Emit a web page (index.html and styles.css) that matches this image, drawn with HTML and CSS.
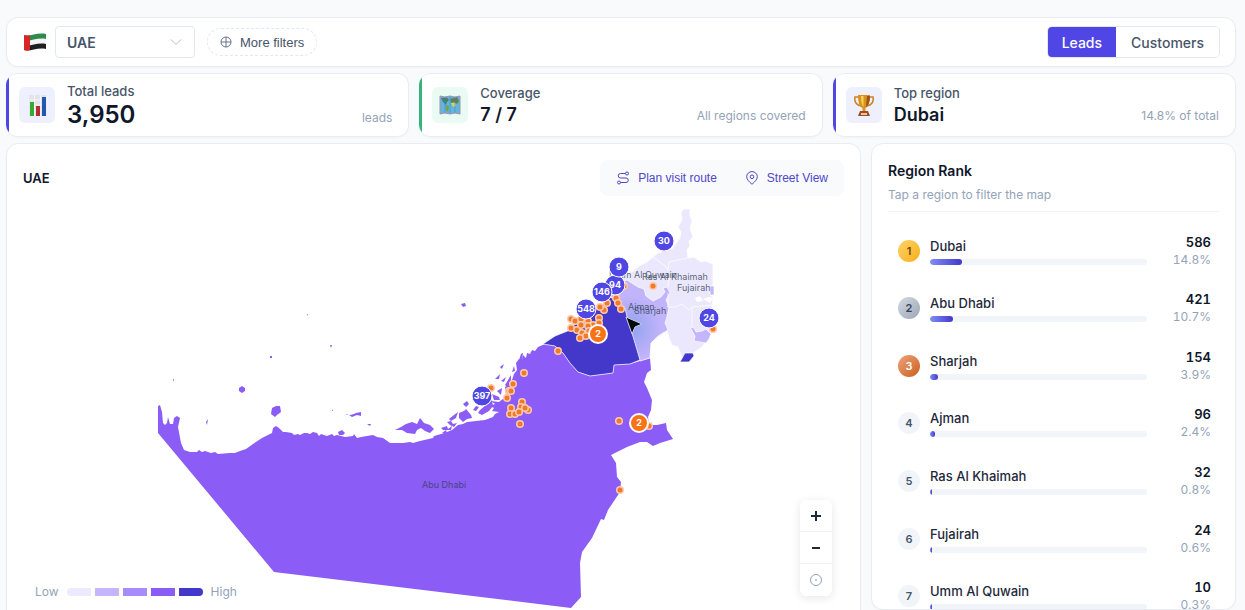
FILE: index.html
```html
<!DOCTYPE html>
<html lang="en">
<head>
<meta charset="utf-8">
<meta name="viewport" content="width=device-width, initial-scale=1">
<title>Lead map</title>
<link rel="stylesheet" href="styles.css">
</head>
<body>
<div class="app">
  <header class="toolbar">
    <svg class="flag" viewBox="0 0 24 20" aria-hidden="true">
      <path d="M1 3C7 5 14 0 23 2V17C14 15 7 20 1 18Z" fill="#f4f4f4"/>
      <path d="M1 3C7 5 14 0 23 2V7C14 5 7 10 1 8Z" fill="#2f8a4c"/>
      <path d="M1 13C7 15 14 10 23 12V17C14 15 7 20 1 18Z" fill="#1f1f22"/>
      <path d="M1 3Q4 4 7 3V18Q4 19 1 18Z" fill="#d92525"/>
    </svg>
    <div class="country">
      <select class="country-select" aria-label="Country"><option>UAE</option></select>
      <svg class="country-chevron" viewBox="0 0 12 8" aria-hidden="true"><path d="M1 1.5L6 6.5L11 1.5"/></svg>
    </div>
    <button class="more" type="button">
      <svg class="more-icon" viewBox="0 0 12 12" aria-hidden="true"><circle cx="6" cy="6" r="5"/><path d="M6 1V11M1 6H11"/></svg>
      More filters
    </button>
    <div class="segments" role="group" aria-label="Data set">
      <button class="segment segment-on" type="button" aria-pressed="true">Leads</button>
      <button class="segment" type="button" aria-pressed="false">Customers</button>
    </div>
  </header>

  <section class="stats">
    <article class="stat">
      <div class="stat-icon">
        <svg viewBox="0 0 22 22" aria-hidden="true"><path d="M3 1H20V22H3Z" fill="#e3e4ea"/><path d="M3 6H20M3 11H20M3 16H20M8.500 1V22M14.500 1V22" stroke="#f4f4f8"/><path d="M4 8H8V22H4Z" fill="#35ab35"/><path d="M10 12H14V22H10Z" fill="#b92c32"/><path d="M16 3H20V22H16Z" fill="#2458ae"/></svg>
      </div>
      <div class="stat-text"><span class="stat-label">Total leads</span><strong class="stat-value stat-value-lg">3,950</strong></div>
      <span class="stat-note stat-note-lg">leads</span>
    </article>
    <article class="stat stat-green">
      <div class="stat-icon">
        <svg viewBox="0 0 22 22" aria-hidden="true"><path d="M1 2L6 3L11 2L16 3L21 2V20L16 19L11 20L6 19L1 20Z" fill="#62b5dc"/><path d="M2 4L8 3.500L10 6L8 8L7 11L4 8Z" fill="#497f72"/><path d="M7 11L10 12L9 18L7 16Z" fill="#7c9e50"/><path d="M11 5L18 3L20 7L18 10L15 8L12 9Z" fill="#5c8255"/><path d="M12 9L16 9L17 12L14 13Z" fill="#d9d451"/><path d="M6 3V19M11 2V20M16 3V19" stroke="#3e87ab" stroke-opacity=".5"/><path d="M1 2L6 3L11 2L16 3L21 2V20L16 19L11 20L6 19L1 20Z" fill="none" stroke="#a58fae"/></svg>
      </div>
      <div class="stat-text"><span class="stat-label">Coverage</span><strong class="stat-value">7 / 7</strong></div>
      <span class="stat-note">All regions covered</span>
    </article>
    <article class="stat">
      <div class="stat-icon">
        <svg viewBox="0 0 22 22" aria-hidden="true"><path d="M6 3H2C1 8 4 11 8 12M16 3H20C21 8 18 11 14 12" fill="none" stroke="#cc8128" stroke-width="1.500"/><path d="M5 1H17C17 9 15 13 12.500 14V18H9.500V14C7 13 5 9 5 1Z" fill="#d9921b"/><path d="M8 2H10.500V13C9 11 8 8 8 2Z" fill="#f8d25a"/><path d="M14 2H17C17 8 15 12 13 13Z" fill="#9c5317"/><path d="M7 17H15L17 22H5Z" fill="#9a4c26"/><path d="M8 19H14V21H8Z" fill="#eec798"/></svg>
      </div>
      <div class="stat-text"><span class="stat-label">Top region</span><strong class="stat-value">Dubai</strong></div>
      <span class="stat-note">14.8% of total</span>
    </article>
  </section>

  <main class="content">
    <section class="panel map-panel">
      <div class="map-head">
        <h2 class="map-title">UAE</h2>
        <div class="map-actions">
          <button class="map-action" type="button">
            <svg class="action-icon" viewBox="0 0 14 14" aria-hidden="true"><circle cx="11" cy="2.500" r="1.500"/><circle cx="3" cy="11.500" r="1.500"/><path d="M9.500 2.500H4.500A2.200 2.200 0 0 0 4.500 7H10A2.200 2.200 0 0 1 10 11.500H4.500"/></svg>
            Plan visit route
          </button>
          <button class="map-action" type="button">
            <svg class="action-icon" viewBox="0 0 14 14" aria-hidden="true"><path d="M7 13.300C4 10.500 1.700 8.500 1.700 5.700A5.300 5.100 0 0 1 12.300 5.700C12.300 8.500 10 10.500 7 13.300Z"/><circle cx="7" cy="5.800" r="1.800"/></svg>
            Street View
          </button>
        </div>
      </div>
      <div class="map-canvas">
        <svg class="map" viewBox="23 200 821 416" role="img" aria-label="Leads by emirate">
          <defs>
            <radialGradient id="hover" gradientUnits="userSpaceOnUse" cx="630" cy="328" r="32"><stop offset="0" stop-color="#8fa1ee"/><stop offset="1" stop-color="#c2b4fb"/></radialGradient>
            <g id="dot"><circle r="4" fill="#fdc9ae"/><circle r="2.500" fill="#f07a26"/></g>
          </defs>
          <path class="fill-4" d="M158 406L160 405L162 412L163 423L165 425L167 423L168 417L170 424H173L174 418L177 416L180 418L178 427L181 443L184 450L190 452L197 452L199 450L202 452L205 451L211 453L215 452L218 454L230 453L235 453L240 451L246 449L253 444L262 438L272 433L273 428L276 426L279 428L283 432L286 432L292 433L294 435L298 434L300 435L304 433L307 433L310 434L313 432L317 433L319 436L321 434L327 436L332 434L334 436L337 435L345 437L353 436L354 434L357 438L361 437L373 435L377 437L383 438L390 443L403 443L410 442L413 443L420 441L433 438L434 436L441 434L447 432L452 430L458 425L463 424L467 422L476 421L485 420L493 417L495 414L499 412L492 411L494 408L490 406L495 404L491 401L499 402L504 398L506 393L505 387L509 385L512 380L514 374L517 370L516 363L519 359L522 360L523 355L526 358L527 353L530 354L532 350L535 351L538 347L545 344L555 346L563 353L570 363L578 372L590 376L613 373L614 365L630 364L650 358L651 370L647 373L644 382L647 388L652 400L651 410L648 417L649 425H657L666 423L667 430L673 439L660 443L653 446L647 442L640 442L627 447L611 455L616 463L617 477L621 482L620 492L608 510L604 520L601 519L592 538L582 552L580 563L581 597L571 608L274 572L158 433Z"/>
          <g class="fill-4">
            <path d="M239 388L242 386L245 388V391L242 393L239 391Z"/><path d="M272 408L276 406L280 406L281 412L277 415L275 417L271 414Z"/>
            <path d="M338 432L342 430L345 433L343 435L339 435Z"/><path d="M345 414L347 415L350 415L354 414L356 413L361 412L361 416L357 415L352 417L349 415Z"/><path d="M367 424L371 424L370 426Z"/>
            <path d="M395 430L401 427L406 424L412 422L417 424L420 418L424 423L430 425L434 429L430 433L425 431L421 428L417 430L415 434L407 433L402 430Z"/>
            <path d="M441 428L447 426L448 429L452 426L451 430L443 430ZM447 422L451 421L453 424L457 423L454 427L450 425ZM442 433L446 430L447 433ZM449 419L454 415L458 412L456 418L451 421Z"/>
            <path d="M459 413L464 411L466 409L471 415L472 418L467 419L463 422L459 418ZM463 404L467 401L469 404L466 407ZM473 410L476 406L479 407L476 411ZM480 410L486 405L492 400L493 406L489 411L482 415L478 413ZM492 394L499 397L500 400L494 400ZM497 391L502 388L501 395ZM501 381L506 377L504 382ZM495 379L500 374L499 379ZM500 367L504 364L502 369ZM505 385L511 375L511 380L508 388Z"/>
            <path d="M512 372L514 366L515 371ZM519 360L521 354L523 353L522 361ZM461 304L465 303L466 306L463 307ZM330 345L332 345L331 348ZM206 422L208 419L207 425ZM173 379L174 379L174 382ZM307 314L308 314L308 316ZM270 356H272V358H270ZM332 409L333 411H332Z"/>
          </g>
          <g class="edge">
            <path class="fill-1" d="M610 276L620 273L632 272L639 266L647 262L653 257L658 253L666 251L673 248L677 242L680 238L681 232L678 227L682 220L681 212L684 209H690V216L692 221L690 228L693 237L689 241L690 246L687 250L688 258L694 257L701 262L705 261L713 264V290L709 293L713 298L712 306L714 313L713 332L707 340L702 347L690 355L682 357L678 347L672 345L670 340L667 331L651 343L640 330V300L618 284Z"/>
            <path fill="url(#hover)" d="M609 295L618 283L627 280L638 287L644 289L646 296L653 301L661 297L665 292L663 288L667 287L670 293L666 300L669 307L667 317L665 323L668 330L658 336L651 343L650 358L640 361L630 330L622 306Z"/>
            <path class="fill-2" d="M690 327L694 328L696 332L702 331L706 329L711 334L709 339L706 343L700 342L694 341L695 336Z"/>
            <path class="fill-2" d="M710 286H714V295L710 295Z"/>
            <path class="fill-5" d="M543 344L555 336L570 330L578 320L590 317L596 309L602 306L609 297L618 300L625 308L627 317L632 333L640 360L630 364L614 365L613 373L590 376L578 372L570 363L563 353L555 346Z"/>
            <path class="fill-5" d="M680 362L685 353H693L694 356L689 362Z"/>
            <path class="border" d="M632 268L641 274L649 279M653 257L665 266L668 270L669 262L678 260L688 258M667 307L675 307L682 304L689 310L692 307V327M668 307V293M692 307L713 305M669 277L668 287"/>
          </g>
          <path fill="#fff" d="M695 298L700 296L703 301L697 302ZM703 299L709 297L713 298L710 303Z"/>
          <g class="map-label">
            <text x="422" y="488">Abu Dhabi</text><text x="609" y="278">Umm Al Quwain</text><text x="642" y="280">Ras Al Khaimah</text><text x="677" y="291">Fujairah</text><text x="628" y="310">Ajman</text><text x="634" y="314">Sharjah</text>
          </g>
          <g>
            <use href="#dot" x="664" y="248"/><use href="#dot" x="653" y="286"/><use href="#dot" x="624" y="286"/><use href="#dot" x="616" y="298"/><use href="#dot" x="618" y="303"/><use href="#dot" x="621" y="309"/><use href="#dot" x="607" y="303"/><use href="#dot" x="604" y="310"/><use href="#dot" x="600" y="307"/><use href="#dot" x="571" y="319"/><use href="#dot" x="575" y="321"/><use href="#dot" x="571" y="328"/><use href="#dot" x="581" y="319"/><use href="#dot" x="588" y="321"/><use href="#dot" x="599" y="318"/><use href="#dot" x="599" y="323"/><use href="#dot" x="593" y="325"/><use href="#dot" x="577" y="330"/><use href="#dot" x="581" y="325"/><use href="#dot" x="588" y="326"/><use href="#dot" x="582" y="333"/><use href="#dot" x="589" y="331"/><use href="#dot" x="580" y="338"/><use href="#dot" x="586" y="336"/><use href="#dot" x="558" y="351"/><use href="#dot" x="713" y="329"/>
            <use href="#dot" x="524" y="373"/><use href="#dot" x="513" y="384"/><use href="#dot" x="509" y="391"/><use href="#dot" x="511" y="391"/><use href="#dot" x="507" y="398"/><use href="#dot" x="491" y="388"/><use href="#dot" x="522" y="402"/><use href="#dot" x="521" y="407"/><use href="#dot" x="511" y="408"/><use href="#dot" x="510" y="414"/><use href="#dot" x="515" y="414"/><use href="#dot" x="528" y="410"/><use href="#dot" x="525" y="408"/><use href="#dot" x="519" y="412"/><use href="#dot" x="520" y="424"/><use href="#dot" x="619" y="421"/><use href="#dot" x="649" y="426"/><use href="#dot" x="620" y="490"/>
          </g>
          <g class="cluster">
            <circle cx="664" cy="241" r="10"/><text x="664" y="244">30</text>
            <circle cx="615" cy="285" r="10"/><text x="615" y="288">94</text>
            <circle cx="619" cy="267" r="10"/><text x="619" y="270">9</text>
            <circle cx="602" cy="292" r="10"/><text x="602" y="295">146</text>
            <circle cx="586" cy="309" r="10"/><text x="586" y="312">548</text>
            <circle cx="709" cy="318" r="10"/><text x="709" y="321">24</text>
            <circle cx="482" cy="396" r="10"/><text x="482" y="399">397</text>
            <circle class="cluster-warm" cx="598" cy="334" r="9"/><text x="598" y="337">2</text>
            <circle class="cluster-warm" cx="639" cy="423" r="9"/><text x="639" y="426">2</text>
          </g>
          <path d="M626 317L642 324L635 327L632 334Z" fill="#08090c" stroke="#c9cfe8" stroke-linejoin="round"/>
        </svg>
        <div class="legend">
          <span>Low</span>
          <div class="legend-scale"><i class="swatch swatch-1"></i><i class="swatch swatch-2"></i><i class="swatch swatch-3"></i><i class="swatch swatch-4"></i><i class="swatch swatch-5"></i></div>
          <span>High</span>
        </div>
        <div class="zoom">
          <button class="zoom-button" type="button" aria-label="Zoom in"><svg viewBox="0 0 12 12"><path d="M6 1V11M1 6H11"/></svg></button>
          <button class="zoom-button" type="button" aria-label="Zoom out"><svg viewBox="0 0 12 12"><path d="M2 6H10"/></svg></button>
          <button class="zoom-button zoom-reset" type="button" aria-label="Reset view"><svg viewBox="0 0 12 12"><circle cx="6" cy="6" r="5.500"/><circle cx="6" cy="6" r=".5"/></svg></button>
        </div>
      </div>
    </section>

    <aside class="panel rank-panel">
      <div class="rank-head">
        <h2 class="rank-title">Region Rank</h2>
        <p class="rank-hint">Tap a region to filter the map</p>
      </div>
      <ol class="rank-list">
        <li class="rank"><span class="badge badge-gold">1</span><div class="rank-main"><span class="rank-name">Dubai</span><div class="bar"><div class="bar-fill" style="width:14.8%"></div></div></div><div class="rank-figures"><strong class="rank-count">586</strong><span class="rank-share">14.8%</span></div></li>
        <li class="rank"><span class="badge badge-silver">2</span><div class="rank-main"><span class="rank-name">Abu Dhabi</span><div class="bar"><div class="bar-fill" style="width:10.7%"></div></div></div><div class="rank-figures"><strong class="rank-count">421</strong><span class="rank-share">10.7%</span></div></li>
        <li class="rank"><span class="badge badge-bronze">3</span><div class="rank-main"><span class="rank-name">Sharjah</span><div class="bar"><div class="bar-fill" style="width:3.9%"></div></div></div><div class="rank-figures"><strong class="rank-count">154</strong><span class="rank-share">3.9%</span></div></li>
        <li class="rank"><span class="badge">4</span><div class="rank-main"><span class="rank-name">Ajman</span><div class="bar"><div class="bar-fill" style="width:2.4%"></div></div></div><div class="rank-figures"><strong class="rank-count">96</strong><span class="rank-share">2.4%</span></div></li>
        <li class="rank"><span class="badge">5</span><div class="rank-main"><span class="rank-name">Ras Al Khaimah</span><div class="bar"><div class="bar-fill" style="width:0.8%"></div></div></div><div class="rank-figures"><strong class="rank-count">32</strong><span class="rank-share">0.8%</span></div></li>
        <li class="rank"><span class="badge">6</span><div class="rank-main"><span class="rank-name">Fujairah</span><div class="bar"><div class="bar-fill" style="width:0.6%"></div></div></div><div class="rank-figures"><strong class="rank-count">24</strong><span class="rank-share">0.6%</span></div></li>
        <li class="rank"><span class="badge">7</span><div class="rank-main"><span class="rank-name">Umm Al Quwain</span><div class="bar"><div class="bar-fill" style="width:0.3%"></div></div></div><div class="rank-figures"><strong class="rank-count">10</strong><span class="rank-share">0.3%</span></div></li>
      </ol>
    </aside>
  </main>
</div>
</body>
</html>
```
FILE: styles.css
```css
* { box-sizing: border-box; }

body {
  margin: 0;
  background: #f8fafc;
  color: #0f172a;
  font-family: Inter, "Liberation Sans", sans-serif;
  font-size: 13px;
}

button, select { font: inherit; margin: 0; cursor: pointer; }
h2, p, ol { margin: 0; padding: 0; }

.app {
  display: flex;
  flex-direction: column;
  gap: 6px;
  height: 100vh;
  padding: 17px 9px 0 6px;
  overflow: hidden;
}

.toolbar, .stat, .panel {
  background: #fff;
  border: 1px solid #e9edf3;
  border-radius: 12px;
  box-shadow: 0 1px 2px rgba(15, 23, 42, 0.03);
}

/* Toolbar */
.toolbar {
  display: flex;
  align-items: center;
  padding: 8px 15px 8px 16px;
}
.flag { width: 24px; height: 20px; margin-right: 8px; }
.country { position: relative; width: 140px; margin-right: 12px; }
.country-select {
  appearance: none;
  width: 100%;
  height: 32px;
  padding: 0 11px;
  border: 1px solid #e2e8f0;
  border-radius: 4px;
  background: #fff;
  color: #475569;
  font-size: 14px;
  font-weight: 600;
}
.country-chevron {
  position: absolute;
  top: 12px;
  right: 13px;
  width: 12px;
  height: 8px;
  fill: none;
  stroke: #b4bac5;
  pointer-events: none;
}
.more {
  display: flex;
  align-items: center;
  gap: 8px;
  height: 28px;
  padding: 0 12px;
  border: 1px dashed #e2e8f0;
  border-radius: 14px;
  background: #fff;
  color: #475569;
  font-family: "Liberation Sans", Arial, sans-serif;
  font-size: 13px;
}
.more-icon { width: 12px; height: 12px; fill: none; stroke: #64748b; }
.segments {
  display: flex;
  height: 32px;
  margin-left: auto;
  border: 1px solid #e2e8f0;
  border-radius: 5px;
  overflow: hidden;
}
.segment {
  padding: 0 15px;
  border: 0;
  background: #fff;
  color: #475569;
  font-size: 14px;
  font-weight: 500;
}
.segment-on { background: #4f46e5; color: #fff; padding: 0 14px; }

/* Key figures */
.stats { display: grid; grid-template-columns: repeat(3, 1fr); gap: 10px; }
.stat {
  display: flex;
  align-items: center;
  gap: 12px;
  padding: 6px 16px 6px 13px;
  border-left: 0;
  background: linear-gradient(90deg, #4f46e5 3px, #fff 3px);
  min-height: 64px;
}
.stat-green { background: linear-gradient(90deg, #34b37e 3px, #fff 3px); }
.stat-icon {
  display: grid;
  place-items: center;
  width: 36px;
  height: 36px;
  border-radius: 6px;
  background: #eef0fe;
}
.stat-green .stat-icon { background: #eafbf3; }
.stat-icon svg { width: 22px; height: 22px; }
.stat-text { display: flex; flex-direction: column; flex: 1; padding-top: 2px; }
.stat-label { color: #475569; font-weight: 500; line-height: 18px; }
.stat-value { font-size: 18px; font-weight: 600; line-height: 26px; }
.stat-value-lg { font-size: 24px; line-height: 30px; }
.stat-note { align-self: flex-end; color: #94a3b8; font-size: 12px; line-height: 20px; padding-bottom: 4px; }
.stat-note-lg { padding-bottom: 2px; }

/* Panels */
.content {
  display: grid;
  grid-template-columns: minmax(0, 1fr) 365px;
  grid-template-rows: minmax(0, 1fr);
  gap: 10px;
  flex: 1;
  min-height: 0;
}
.panel { padding: 16px; }
.map-panel { min-height: 490px; }
.map-head { display: flex; align-items: center; justify-content: space-between; margin-bottom: 4px; }
.map-title { font-size: 13px; font-weight: 600; line-height: 20px; }
.map-actions {
  display: flex;
  gap: 4px;
  padding: 4px;
  border-radius: 8px;
  background: #f8fafc;
}
.map-action {
  display: flex;
  align-items: center;
  gap: 8px;
  height: 28px;
  padding: 0 12px;
  border: 0;
  background: none;
  color: #4f46c8;
  font-family: "Liberation Sans", Arial, sans-serif;
  font-size: 12px;
}
.action-icon { width: 14px; height: 14px; fill: none; stroke: currentColor; }

/* Map */
.map-canvas { position: relative; }
.map { display: block; width: 100%; }
.fill-1 { fill: #ebe8fd; }
.fill-2 { fill: #c4b5fd; }
.fill-4 { fill: #8b5cf6; }
.fill-5 { fill: #4338ca; }
.edge { stroke: #fff; stroke-opacity: 0.7; }
.border { fill: none; }
.map-label { fill: #334155; fill-opacity: 0.8; font-size: 9px; }
.cluster { font-size: 9px; font-weight: 700; text-anchor: middle; }
.cluster circle { fill: #4f46e5; stroke: #fff; }
.cluster .cluster-warm { fill: #f97316; stroke-width: 2px; }
.cluster text { fill: #fff; }

.legend {
  position: absolute;
  left: 12px;
  bottom: 15px;
  display: flex;
  align-items: center;
  gap: 8px;
  color: #94a3b8;
  font-size: 12px;
  line-height: 18px;
}
.legend-scale { display: flex; gap: 4px; }
.swatch { width: 24px; height: 8px; }
.swatch-1 { background: #ede9fe; border-radius: 4px 0 0 4px; }
.swatch-2 { background: #c4b5fd; }
.swatch-3 { background: #a78bfa; }
.swatch-4 { background: #8b5cf6; }
.swatch-5 { background: #4338ca; border-radius: 0 4px 4px 0; }

.zoom {
  position: absolute;
  right: 12px;
  bottom: 20px;
  display: flex;
  flex-direction: column;
  width: 32px;
  border-radius: 6px;
  background: #fff;
  box-shadow: 0 2px 10px rgba(15, 23, 42, 0.1);
}
.zoom-button {
  display: grid;
  place-items: center;
  height: 32px;
  padding: 0;
  border: 0;
  border-bottom: 1px solid #eef1f5;
  background: none;
}
.zoom-button:last-child { border-bottom: 0; }
.zoom-button svg { width: 12px; height: 12px; fill: none; stroke: #1e293b; stroke-width: 2px; }
.zoom-button.zoom-reset svg { stroke: #94a3b8; stroke-width: 1px; }

/* Ranking */
.rank-panel { overflow: hidden; }
.rank-head { padding-bottom: 7px; border-bottom: 1px solid #f1f5f9; }
.rank-title { font-size: 14px; font-weight: 600; line-height: 22px; }
.rank-hint { margin-top: 4px; color: #94a3b8; font-size: 12px; line-height: 18px; }
.rank-list {
  display: grid;
  grid-auto-rows: 1fr;
  min-height: 403px;
  margin-top: 10px;
  list-style: none;
}
.rank {
  display: grid;
  grid-template-columns: 22px minmax(0, 1fr) 48px;
  align-items: center;
  padding: 0 8px 0 10px;
}
.badge {
  display: grid;
  place-items: center;
  width: 22px;
  height: 22px;
  border-radius: 50%;
  background: #f1f5f9;
  color: #475569;
  font-size: 11px;
  font-weight: 600;
}
.badge-gold { background: linear-gradient(135deg, #fcd56a, #f9ae18); color: #78450f; }
.badge-silver { background: linear-gradient(135deg, #d5dae3, #9ca5b6); color: #334155; }
.badge-bronze { background: linear-gradient(135deg, #f0a27a, #c8601f); color: #fff; }
.rank-main { display: flex; flex-direction: column; gap: 4px; padding: 0 16px 0 10px; }
.rank-name { color: #1e293b; font-size: 13px; font-weight: 500; line-height: 18px; }
.bar { height: 6px; border-radius: 3px; background: #f1f5f9; overflow: hidden; }
.bar-fill { height: 100%; min-width: 2px; border-radius: 3px; background: linear-gradient(90deg, #818cf8, #4338ca); }
.rank-figures { display: flex; flex-direction: column; text-align: right; font-variant-numeric: tabular-nums; }
.rank-count { font-size: 13px; font-weight: 600; line-height: 18px; }
.rank-share { color: #94a3b8; font-size: 12px; line-height: 18px; }
```
